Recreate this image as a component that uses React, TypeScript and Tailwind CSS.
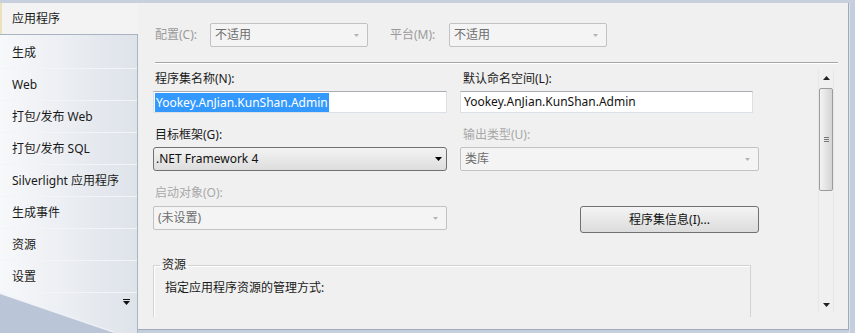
import React from 'react';

// Visual Studio "应用程序" project properties page (Win7 look)

const tabs = ['生成', 'Web', '打包/发布 Web', '打包/发布 SQL', 'Silverlight 应用程序', '生成事件', '资源', '设置'];

const Caret = ({ className }: { className?: string }) => (
  <svg width="7" height="4" viewBox="0 0 7 4" className={className}>
    <path d="M0 0h7L3.5 4z" fill="currentColor" />
  </svg>
);

const CaretUp = ({ className }: { className?: string }) => (
  <svg width="7" height="4" viewBox="0 0 7 4" className={className}>
    <path d="M0 4h7L3.5 0z" fill="currentColor" />
  </svg>
);

const DisabledSelect = ({ value, width }: { value: string; width: string }) => (
  <div
    className={`${width} h-[24px] flex items-center border border-[#c2c2c2] rounded-[2px] bg-[#f4f4f4] pl-[4px] pr-[8px] text-[#6d6d6d]`}
  >
    <span className="flex-1">{value}</span>
    <svg width="5" height="3" viewBox="0 0 5 3">
      <path d="M0 0h5L2.5 3z" fill="#b4b4b4" />
    </svg>
  </div>
);

const TextInput = ({ children }: { children: React.ReactNode }) => (
  <div className="h-[22px] flex items-center bg-white border border-[#dbdfe6] border-t-[#abadb3] pl-[1px] text-[#111]">
    {children}
  </div>
);

export default function App() {
  return (
    <div className="w-[855px] h-[333px] flex flex-col bg-[#c4cedc] text-[12px] leading-[16px] text-[#1a1a1a] font-['Noto_Sans','Noto_Sans_CJK_SC',sans-serif] overflow-hidden">
      <div className="h-[3px] bg-[#c7d0dc]" />
      <div className="flex flex-1 min-h-0">
        {/* left tab strip */}
        <aside className="w-[138px] flex flex-col">
          <div className="h-[31px] flex items-center pl-[10px] pt-px bg-[#f3f3f3] border-l-2 border-[#ece1bd]">应用程序</div>
          <div className="relative flex-1 flex flex-col border-t border-r border-[#a9b3c1] bg-gradient-to-r from-[#f7f8fa] to-[#dee3ea] pt-[2px] overflow-hidden">
            {tabs.map((t) => (
              <div key={t} className="h-[32px] flex items-center pl-[12px] border-b border-[#f3f4f7]">
                {t}
              </div>
            ))}
            <div className="flex justify-end pr-[7px] pt-[6px]">
              <svg width="7" height="6" viewBox="0 0 7 6">
                <rect x="0" y="0" width="7" height="1" fill="#111" />
                <path d="M0 2h7L3.5 6z" fill="#111" />
              </svg>
            </div>
            <svg className="absolute left-0 bottom-0" width="137" height="40" viewBox="0 0 137 40">
              <polygon points="0,1 114,40 0,40" fill="#bac6d8" />
              <line x1="0" y1="0" x2="114" y2="39" stroke="#eef1f6" strokeWidth="1" />
            </svg>
          </div>
        </aside>

        {/* main page */}
        <main className="w-[711px] flex flex-col">
          <div className="h-[327px] flex flex-col bg-[#f0f0f0] border-r border-b border-[#9eabbd]">
            <div className="flex items-center pl-[17px] pt-[20px]">
              <span className="w-[55px] text-[#9a9a9a]">配置(C):</span>
              <DisabledSelect value="不适用" width="w-[158px]" />
              <span className="ml-[22px] w-[59px] text-[#9a9a9a]">平台(M):</span>
              <DisabledSelect value="不适用" width="w-[158px]" />
            </div>
            <div className="ml-[17px] mr-[10px] mt-[15px] h-[2px] border-t border-[#a6a6a6] border-b border-b-white" />

            <div className="flex h-[253px] overflow-hidden">
              <div className="flex-1 pl-[15px] pt-[7px]">
                <div className="flex gap-[13px]">
                  <div className="w-[294px]">
                    <div className="pl-[2px]">程序集名称(N):</div>
                    <div className="mt-[4px]">
                      <TextInput>
                        <span className="bg-[#3399ff] text-white px-[1px] leading-[19px]">Yookey.AnJian.KunShan.Admin</span>
                      </TextInput>
                    </div>
                  </div>
                  <div className="w-[293px]">
                    <div className="pl-[3px]">默认命名空间(L):</div>
                    <div className="mt-[4px]">
                      <TextInput>
                        <span className="px-[2px]">Yookey.AnJian.KunShan.Admin</span>
                      </TextInput>
                    </div>
                  </div>
                </div>

                <div className="flex gap-[13px] mt-[14px]">
                  <div className="w-[294px]">
                    <div className="pl-[2px]">目标框架(G):</div>
                    <div className="mt-[4px] h-[24px] flex items-center border border-[#707070] rounded-[3px] bg-gradient-to-b from-[#f3f3f3] to-[#dddddd] pl-[2px] pr-[4px] text-[#111]">
                      <span className="flex-1">.NET Framework 4</span>
                      <Caret className="text-black" />
                    </div>
                  </div>
                  <div className="w-[299px]">
                    <div className="pl-[3px] text-[#a8a8a8]">输出类型(U):</div>
                    <div className="mt-[4px]">
                      <DisabledSelect value="类库" width="w-[299px]" />
                    </div>
                  </div>
                </div>

                <div className="flex items-start mt-[14px]">
                  <div className="w-[294px]">
                    <div className="pl-[2px] text-[#a8a8a8]">启动对象(O):</div>
                    <div className="mt-[5px]">
                      <DisabledSelect value="(未设置)" width="w-[294px]" />
                    </div>
                  </div>
                  <button className="ml-[133px] mt-[21px] w-[179px] h-[27px] border border-[#707070] rounded-[3px] bg-gradient-to-b from-[#f4f4f4] to-[#dcdcdc] text-[#111]">
                    程序集信息(I)...
                  </button>
                </div>

                <fieldset className="mt-[24px] w-[598px] h-[120px] border border-[#d3d3d3] shadow-[inset_1px_1px_0_#ffffff]">
                  <legend className="ml-[6px] px-[2px]">资源</legend>
                  <div className="pl-[11px] pt-[7px]">指定应用程序资源的管理方式:</div>
                </fieldset>
              </div>

              {/* vertical scrollbar */}
              <div className="w-[16px] mr-[14px] mt-[5px] mb-[4px] flex flex-col border-x border-[#e7e7e7]">
                <div className="h-[17px] flex items-center justify-center">
                  <CaretUp className="text-[#222]" />
                </div>
                <div className="mt-[2px] h-[103px] rounded-[2px] border border-[#9c9c9c] bg-gradient-to-r from-[#f4f4f4] to-[#d4d4d4] flex flex-col items-center justify-center gap-[1px]">
                  <div className="w-[5px] h-px bg-[#777]" />
                  <div className="w-[5px] h-px bg-[#777]" />
                  <div className="w-[5px] h-px bg-[#777]" />
                </div>
                <div className="flex-1" />
                <div className="h-[17px] flex items-center justify-center">
                  <Caret className="text-[#222]" />
                </div>
              </div>
            </div>
          </div>
        </main>
        <div className="flex-1 border-l border-[#dbe2ec]" />
      </div>
    </div>
  );
}
